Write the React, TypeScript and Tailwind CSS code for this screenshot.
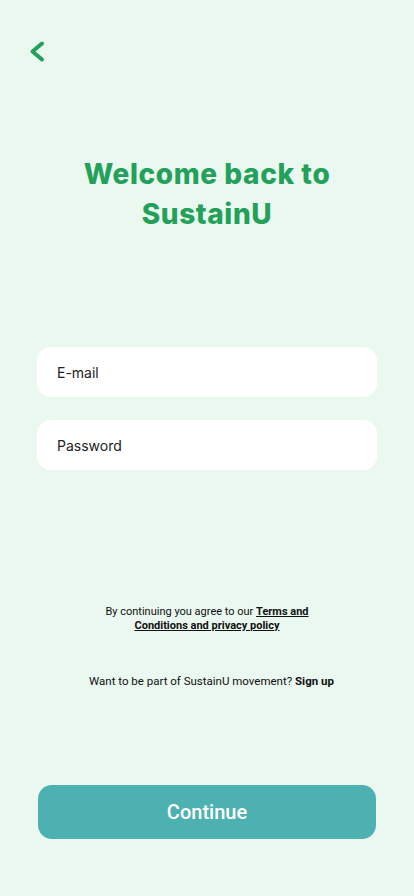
import React from "react";

export default function App() {
  return (
    <div className="min-h-screen w-full bg-[#eaf8f0] flex flex-col" style={{ fontFamily: "Roboto, sans-serif" }}>
      {/* back */}
      <div className="pt-[39px] pl-[25px]">
        <button aria-label="Back" className="w-[24px] h-[24px] block">
          <svg width="24" height="24" viewBox="0 0 24 24" fill="none" stroke="#23a15b" strokeWidth="4" strokeLinecap="round" strokeLinejoin="round">
            <path d="M17 4.5 7.5 12.5 17 20.5" />
          </svg>
        </button>
      </div>

      <h1 className="mt-[91px] text-center text-[28px] leading-[40px] font-extrabold text-[#23a15b] tracking-[0.6px]" style={{ fontFamily: "Inter, sans-serif" }}>
        Welcome back to
        <br />
        SustainU
      </h1>

      <div className="mt-[113px] px-[37px] flex flex-col gap-[23px]" style={{ fontFamily: "Inter, sans-serif" }}>
        <div className="h-[50px] rounded-[14px] bg-white flex items-center px-[20px] text-[14px] text-[#222]">E-mail</div>
        <div className="h-[50px] rounded-[14px] bg-white flex items-center px-[20px] text-[14px] text-[#222]">Password</div>
      </div>

      <p className="mt-[135px] text-center text-[11px] leading-[14px] text-[#111]">
        By continuing you agree to our{" "}
        <a className="font-bold underline">Terms and
        <br />
        Conditions and privacy policy</a>
      </p>

      <p className="mt-[41px] pl-[9px] text-center text-[11.5px] leading-[14px] text-[#111]">
        Want to be part of SustainU movement? <a className="font-bold">Sign up</a>
      </p>

      <div className="mt-[97px] px-[38px]">
        <button className="w-full h-[54px] rounded-[14px] bg-[#4db1b1] text-white text-[20px] font-medium">Continue</button>
      </div>
    </div>
  );
}
